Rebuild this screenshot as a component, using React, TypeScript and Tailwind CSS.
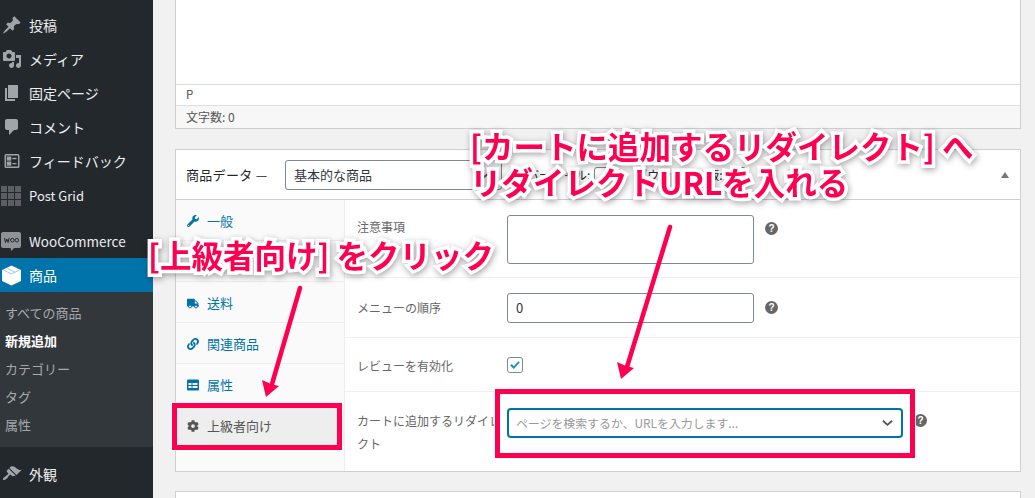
import { FaWrench, FaTruck, FaLink, FaCog } from "react-icons/fa";

const F = "[font-family:'Noto_Sans_CJK_JP','Noto_Sans',sans-serif]";

function Dash({ d, className = "" }: { d: string; className?: string }) {
  return (
    <svg viewBox="0 0 20 20" className={`w-5 h-5 fill-current ${className}`}>
      <path d={d} />
    </svg>
  );
}

const icons = {
  post: "M10.44 3.02l1.82-1.82 6.36 6.35-1.83 1.82c-1.05-.68-2.48-.57-3.41.36l-.75.75c-.92.93-1.04 2.35-.35 3.41l-1.83 1.82-2.41-2.41-2.8 2.79c-.42.42-3.38 2.71-3.8 2.29s1.86-3.39 2.28-3.81l2.79-2.79L4.1 9.36l1.83-1.82c1.05.69 2.48.57 3.4-.36l.75-.75c.93-.92 1.05-2.35.36-3.41z",
  media: "M13 11V4c0-.55-.45-1-1-1h-1.67L9 1H5L3.67 3H2c-.55 0-1 .45-1 1v7c0 .55.45 1 1 1h10c.55 0 1-.45 1-1zM7 4.5c1.38 0 2.5 1.12 2.5 2.5S8.38 9.5 7 9.5 4.5 8.38 4.5 7 5.62 4.5 7 4.5zM14 6h5v10.5c0 1.38-1.12 2.5-2.5 2.5S14 17.88 14 16.5s1.12-2.5 2.5-2.5c.17 0 .34.02.5.05V9h-3V6zm-4 8.05V13h2v3.5c0 1.38-1.12 2.5-2.5 2.5S7 17.88 7 16.5 8.12 14 9.5 14c.17 0 .34.02.5.05z",
  page: "M6 15V2h10v13H6zm-1 1h8v2H3V5h2v11z",
  comment: "M5 2h9c1.1 0 2 .9 2 2v7c0 1.1-.9 2-2 2h-2l-5 5v-5H5c-1.1 0-2-.9-2-2V4c0-1.1.9-2 2-2z",
  brush: "M14.48 11.06L7.41 3.99l1.5-1.5c.5-.56 2.3-.47 3.51.32 1.21.8 1.43 1.28 2.91 2.1 1.18.64 2.45 1.26 4.45.85zm-.71.71L6.7 4.7 4.93 6.47c-.39.39-.39 1.02 0 1.41l1.06 1.06c.39.39.39 1.03 0 1.42-.6.6-1.43 1.11-2.21 1.69-.35.26-.7.53-1.01.84C1.43 13.23.4 14.95 1.2 15.75c.8.8 2.52-.23 3.85-1.56.31-.31.58-.66.84-1.01.58-.78 1.09-1.61 1.69-2.21.39-.39 1.03-.39 1.42 0l1.06 1.06c.39.39 1.02.39 1.41 0z",
};

function MenuRow({ icon, label }: { icon: React.ReactNode; label: string }) {
  return (
    <div className="h-[34px] flex items-center text-[#eee] text-[14px]">
      <div className="w-[29px] flex justify-center pr-[5px] text-[#a0a5aa]">{icon}</div>
      <span>{label}</span>
    </div>
  );
}

function Help() {
  return (
    <span className="w-[13px] h-[13px] rounded-full bg-[#666] text-white text-[10px] font-bold flex items-center justify-center leading-none shrink-0 [font-family:'Liberation_Sans',sans-serif]">
      ?
    </span>
  );
}

function Tab({ icon, label, active }: { icon?: React.ReactNode; label: string; active?: boolean }) {
  return (
    <div
      className={`h-[41px] flex items-center pl-[11px] gap-[8px] pt-[2px] text-[13px] border-b border-[#eee] ${
        active ? "bg-[#eee] text-[#555]" : "text-[#0073aa]"
      }`}
    >
      <span className="w-[12px] flex justify-center">{icon}</span>
      <span>{label}</span>
    </div>
  );
}

function Field({ label, h, children, last }: { label: React.ReactNode; h: string; children: React.ReactNode; last?: boolean }) {
  return (
    <div className={`flex ${h} ${last ? "" : "border-b border-[#eee]"}`}>
      <div className="w-[162px] pl-[12px] text-[12px] text-[#666] shrink-0">{label}</div>
      {children}
    </div>
  );
}

const annText =
  "font-bold text-[#ff0050] text-[31.5px] leading-[36px] whitespace-nowrap [-webkit-text-stroke:7px_white] [paint-order:stroke_fill] [filter:drop-shadow(1px_2px_3px_rgba(0,0,0,0.35))]";

export default function App() {
  return (
    <div className={`relative flex w-[1035px] h-[498px] overflow-hidden bg-[#f1f1f1] ${F}`}>
      {/* Sidebar */}
      <aside className="w-[153px] shrink-0 bg-[#23282d] pt-[8px]">
        <MenuRow icon={<Dash d={icons.post} />} label="投稿" />
        <MenuRow icon={<Dash d={icons.media} />} label="メディア" />
        <MenuRow icon={<Dash d={icons.page} />} label="固定ページ" />
        <MenuRow icon={<Dash d={icons.comment} />} label="コメント" />
        <MenuRow
          icon={
            <svg viewBox="0 0 20 20" className="w-[18px] h-[18px] fill-none stroke-current stroke-[1.6]">
              <rect x="2.5" y="3" width="15" height="14" rx="1" />
              <rect x="5" y="5.8" width="3.4" height="3" className="fill-current" />
              <rect x="5" y="11.4" width="3.4" height="3" className="fill-current" />
              <path d="M10.5 7.3h4.5M10.5 12.9h4.5" />
            </svg>
          }
          label="フィードバック"
        />
        <div className="h-[36px] flex items-center text-[#eee] text-[13px]">
          <div className="w-[29px] pl-px">
            <div className="grid grid-cols-3 gap-px w-[20px]">
              {Array.from({ length: 9 }).map((_, i) => (
                <span key={i} className="h-[6px] bg-[#5b5f63]" />
              ))}
            </div>
          </div>
          <span>Post Grid</span>
        </div>
        <div className="h-[34px] mt-[10px] flex items-center text-[#eee] text-[13.5px]">
          <div className="w-[29px] pl-px">
            <svg viewBox="0 0 20 19" className="w-[20px] h-[19px]">
              <path d="M2 0h16a2 2 0 0 1 2 2v12a2 2 0 0 1-2 2h-5l-2.5 3-1-3H2a2 2 0 0 1-2-2V2a2 2 0 0 1 2-2z" fill="#8f9397" />
              <path d="M3.5 6l1 4.5 1.3-3.5 1.3 3.5 1-4.5" fill="none" stroke="#23282d" strokeWidth="1" />
              <circle cx="11.3" cy="8.2" r="1.8" fill="none" stroke="#23282d" strokeWidth="1" />
              <circle cx="15.8" cy="8.2" r="1.8" fill="none" stroke="#23282d" strokeWidth="1" />
            </svg>
          </div>
          <span>WooCommerce</span>
        </div>
        <div className="h-[34px] bg-[#0073aa] flex items-center text-white text-[14px]">
          <div className="w-[29px] pl-[1px]">
            <svg viewBox="0 0 20 20" className="w-[21px] h-[21px]">
              <path d="M10 .5l9 4.2v10.6L10 19.5l-9-4.2V4.700z" fill="#fff" />
              <path d="M2.500 5l7.500 3.500L17.500 5M6 3.300l7.500 3.500" fill="none" stroke="#7fb9d4" strokeWidth="0.7" />
            </svg>
          </div>
          <span>商品</span>
        </div>
        <div className="h-[155px] bg-[#32373c] pt-[7px] pl-[5px] text-[13px] text-[#a6a9ac]">
          <div className="h-[28px] flex items-center">すべての商品</div>
          <div className="h-[28px] flex items-center text-white font-bold">新規追加</div>
          <div className="h-[28px] flex items-center">カテゴリー</div>
          <div className="h-[28px] flex items-center">タグ</div>
          <div className="h-[28px] flex items-center">属性</div>
        </div>
        <div className="mt-[10px]">
          <MenuRow icon={<Dash d={icons.brush} />} label="外観" />
        </div>
      </aside>

      {/* Main */}
      <main className="w-[846px] ml-[22px] shrink-0">
        <section className="h-[129px] bg-white border border-t-0 border-[#ccd0d4] flex flex-col">
          <div className="flex-1" />
          <div className="h-[21px] border-t border-[#ddd] pl-[10px] text-[11.5px] text-[#555] flex items-center">P</div>
          <div className="h-[23px] border-t border-[#ddd] bg-[#f7f7f7] pl-[10px] text-[12px] text-[#555] flex items-center">
            文字数: 0
          </div>
        </section>

        <section className="mt-[20px] h-[323px] bg-white border border-[#ccd0d4] flex flex-col">
          <header className="h-[50px] shrink-0 border-b border-[#ccd0d4] flex items-center pl-[10px] text-[13px] text-[#23282d]">
            <span className="w-[99px] tracking-[0.3px]">商品データ —</span>
            <div className="relative w-[217px] h-[30px] border border-[#7e8993] rounded-[3px] pl-[8px] flex items-center text-[13px] text-[#32373c]">
              基本的な商品
              <svg viewBox="0 0 12 8" className="absolute right-[11px] top-[10px] w-[11px] h-[8px] fill-none stroke-[#555] stroke-2">
                <path d="M1 1.500l5 4.500 5-4.500" />
              </svg>
            </div>
            <span className="ml-[25px] text-[12px]">バーチャル:</span>
            <span className="ml-[4px] w-[16px] h-[16px] border border-[#7e8993] rounded-[3px]" />
            <span className="ml-[25px] text-[12px]">ダウンロード版:</span>
            <span className="ml-[7px] w-[16px] h-[16px] border border-[#7e8993] rounded-[3px]" />
            <span className="ml-auto mr-[11px] w-0 h-0 border-x-[4px] border-x-transparent border-b-[6px] border-b-[#72777c]" />
          </header>
          <div className="flex-1 flex">
            <nav className="w-[169px] shrink-0 bg-[#fafafa] border-r border-[#eee]">
              <Tab icon={<FaWrench className="w-[12px] h-[12px]" />} label="一般" />
              <Tab label="在庫" />
              <Tab icon={<FaTruck className="w-[13px] h-[13px]" />} label="送料" />
              <Tab icon={<FaLink className="w-[12px] h-[12px]" />} label="関連商品" />
              <Tab
                icon={
                  <svg viewBox="0 0 12 12" className="w-[12px] h-[12px]">
                    <rect width="12" height="11" y="0.5" rx="1" fill="#0073aa" />
                    <rect x="1.500" y="4" width="3" height="2" fill="#fff" />
                    <rect x="1.500" y="7" width="3" height="2" fill="#fff" />
                    <rect x="5.500" y="4" width="5" height="2" fill="#fff" />
                    <rect x="5.500" y="7" width="5" height="2" fill="#fff" />
                  </svg>
                }
                label="属性"
              />
              <Tab icon={<FaCog className="w-[12px] h-[12px] text-[#555]" />} label="上級者向け" active />
            </nav>
            <div className="flex-1 flex flex-col">
              <Field h="h-[78px] pt-[15px]" label={<span className="block pt-[3px]">注意事項</span>}>
                <div className="w-[247px] h-[49px] border border-[#7e8993] rounded-[3px] bg-white" />
                <span className="ml-[11px] mt-[7px]"><Help /></span>
              </Field>
              <Field h="h-[60px] pt-[15px]" label={<span className="block pt-[6px]">メニューの順序</span>}>
                <div className="w-[247px] h-[30px] border border-[#7e8993] rounded-[3px] pl-[8px] flex items-center text-[13px] text-[#32373c]">
                  0
                </div>
                <span className="ml-[11px] mt-[8px]"><Help /></span>
              </Field>
              <Field h="h-[54px] pt-[19px]" label={<span className="block">レビューを有効化</span>}>
                <div className="w-[16px] h-[16px] border border-[#7e8993] rounded-[3px] flex items-center justify-center">
                  <svg viewBox="0 0 16 16" className="w-[15px] h-[15px]">
                    <path d="M2.500 8l1.800-1.600 2.300 2.500L12 3l1.500 1.400L6.700 12z" fill="#1e8cbe" />
                  </svg>
                </div>
              </Field>
              <Field
                last
                h="flex-1 pt-[16px]"
                label={<span className="block w-[146px] leading-[23px] pt-px">カートに追加するリダイレクト</span>}
              >
                <div className="w-[396px] h-[30px] border-2 border-[#0073aa] rounded-[4px] pl-[7px] pr-[8px] flex items-center justify-between text-[11.9px] text-[#999]">
                  <span>ページを検索するか、URLを入力します...</span>
                  <svg viewBox="0 0 12 8" className="w-[11px] h-[8px] fill-none stroke-[#555] stroke-2">
                    <path d="M1 1.500l5 4.500 5-4.500" />
                  </svg>
                </div>
                <span className="ml-[11px] mt-[6px]"><Help /></span>
              </Field>
            </div>
          </div>
        </section>

        <section className="mt-[19px] h-[40px] bg-white border border-[#ccd0d4]" />
      </main>

      {/* Annotations */}
      <div className="absolute left-[172px] top-[403px] w-[170px] h-[47px] border-[5px] border-[#ff0050] shadow-[0_0_0_1px_rgba(255,255,255,0.8)]" />
      <div className="absolute left-[495px] top-[389px] w-[420px] h-[69px] border-[5px] border-[#ff0050] shadow-[0_0_0_1px_rgba(255,255,255,0.8)]" />

      <svg className="absolute left-0 top-0 pointer-events-none" width="1035" height="498">
        <path d="M300 288L272 384" stroke="#ff0050" strokeWidth="4.500" strokeLinecap="round" fill="none" />
        <path d="M266 397L262 380L271 384L279 386z" fill="#ff0050" />
        <path d="M670 227L627 367" stroke="#ff0050" strokeWidth="4.500" strokeLinecap="round" fill="none" />
        <path d="M621 379L617 362L626 366L634 368z" fill="#ff0050" />
      </svg>

      <div className={`absolute left-[148px] top-[236px] ${annText}`}>[上級者向け] をクリック</div>
      <div className={`absolute left-[470px] top-[127px] ${annText}`}>
        <div>[カートに追加するリダイレクト] へ</div>
        <div>リダイレクトURLを入れる</div>
      </div>
    </div>
  );
}
